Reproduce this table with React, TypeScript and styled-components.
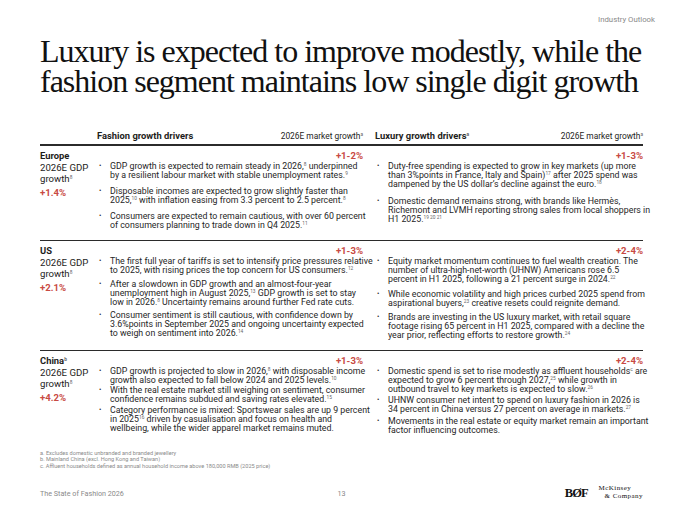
import React from "react";
import styled, { createGlobalStyle } from "styled-components";

const palette = {
  ink: "#1d1d1b",
  red: "#c84a43",
  grey: "#8a8a8a",
  rule: "#2b2b2b",
};

const GlobalStyle = createGlobalStyle`
  html, body {
    margin: 0;
    padding: 0;
    background: #ffffff;
  }
  body {
    font-family: Roboto, "Liberation Sans", Arial, sans-serif;
    color: ${palette.ink};
  }
  * {
    box-sizing: border-box;
  }
`;

const Slide = styled.div`
  width: 681px;
  height: 511px;
  display: flex;
  flex-direction: column;
  padding: 16px 38px 0 40px;
  overflow: hidden;
  background: #fff;
`;

const SectionTag = styled.div`
  align-self: flex-end;
  margin-right: -12px;
  font-size: 7.8px;
  line-height: 8px;
  color: ${palette.grey};
`;

const Title = styled.h1`
  margin: 12px 0 0;
  font-family: "Liberation Serif", "Times New Roman", serif;
  font-weight: 400;
  font-size: 32px;
  line-height: 30px;
  letter-spacing: -1px;
  white-space: nowrap;
  color: #111;
`;

const Table = styled.div`
  margin-top: 35px;
  display: flex;
  flex-direction: column;
`;

const Row = styled.div<{ $head?: boolean; $last?: boolean }>`
  display: grid;
  grid-template-columns: 57px 266px 280px;
  padding: ${(p) => (p.$head ? "0 0 3px" : "4px 0 10px")};
  border-bottom: ${(p) =>
    p.$last ? "none" : p.$head ? `2px solid ${palette.rule}` : `1px solid ${palette.rule}`};
`;

const HeadCell = styled.div<{ $inset?: boolean }>`
  display: flex;
  justify-content: space-between;
  align-items: baseline;
  padding-left: ${(p) => (p.$inset ? "12px" : "0")};
  font-size: 8.4px;
  line-height: 10px;
`;

const HeadTitle = styled.span`
  font-weight: 700;
  font-size: 9.4px;
`;

const Label = styled.div`
  display: flex;
  flex-direction: column;
`;

const RegionName = styled.div`
  font-weight: 700;
  font-size: 9.4px;
  line-height: 12px;
`;

const GdpText = styled.div`
  font-size: 9.6px;
  line-height: 11px;
`;

const RedValue = styled.div<{ $align?: "left" | "right" }>`
  color: ${palette.red};
  font-weight: 700;
  font-size: 9.6px;
  line-height: 12px;
  text-align: ${(p) => p.$align ?? "left"};
`;

const GdpValue = styled(RedValue)`
  margin-top: 3px;
`;

const Drivers = styled.div<{ $inset?: boolean }>`
  display: flex;
  flex-direction: column;
  padding-left: ${(p) => (p.$inset ? "12px" : "0")};
`;

const Bullets = styled.ul`
  list-style: none;
  margin: 0;
  padding: 0;
  display: flex;
  flex-direction: column;
`;

const Bullet = styled.li<{ $space: number }>`
  display: grid;
  grid-template-columns: 13px 1fr;
  margin-top: ${(p) => p.$space}px;
  font-size: 8.8px;
  line-height: 9px;
  color: #262626;
  white-space: nowrap;

  &::before {
    content: "•";
    padding-left: 2px;
    font-size: 7px;
  }
`;

const Sup = styled.sup`
  font-size: 4.8px;
  line-height: 0;
  vertical-align: 3px;
  color: #666;
`;

const Footnotes = styled.div`
  margin-top: auto;
  font-size: 5.6px;
  line-height: 6.5px;
  color: ${palette.grey};
`;

const Footer = styled.div`
  margin-top: 18px;
  height: 24px;
  display: grid;
  grid-template-columns: 1fr auto 1fr;
  align-items: start;
`;

const FooterText = styled.span`
  font-size: 7.2px;
  line-height: 9px;
  color: ${palette.grey};
  padding-top: 2px;
`;

const Logos = styled.div`
  justify-self: end;
  display: flex;
  align-items: flex-start;
  gap: 11px;
  margin-top: -3px;
`;

const BofMark = styled.span`
  font-family: "Liberation Serif", "Times New Roman", serif;
  font-weight: 700;
  font-size: 12.5px;
  line-height: 14px;
  letter-spacing: -1px;
  color: #111;
  padding-top: 2px;
`;

const McKMark = styled.span`
  font-family: "Liberation Serif", "Times New Roman", serif;
  font-size: 7px;
  line-height: 8px;
  letter-spacing: 0.45px;
  color: #111;
  display: flex;
  flex-direction: column;

  > span:last-child {
    padding-left: 6px;
  }
`;

type Line = React.ReactNode;

interface IDrivers {
  value: string;
  gaps: [number, number];
  bullets: Line[][];
}

interface IRegion {
  name: React.ReactNode;
  gdp: string;
  fashion: IDrivers;
  luxury: IDrivers;
}

const regions: IRegion[] = [
  {
    name: "Europe",
    gdp: "+1.4%",
    fashion: {
      value: "+1-2%",
      gaps: [7, 7],
      bullets: [
        [
          <>GDP growth is expected to remain steady in 2026,<Sup>8</Sup> underpinned</>,
          <>by a resilient labour market with stable unemployment rates.<Sup>9</Sup></>,
        ],
        [
          <>Disposable incomes are expected to grow slightly faster than</>,
          <>2025,<Sup>10</Sup> with inflation easing from 3.3 percent to 2.5 percent.<Sup>8</Sup></>,
        ],
        [
          <>Consumers are expected to remain cautious, with over 60 percent</>,
          <>of consumers planning to trade down in Q4 2025.<Sup>11</Sup></>,
        ],
      ],
    },
    luxury: {
      value: "+1-3%",
      gaps: [8, 8],
      bullets: [
        [
          <>Duty-free spending is expected to grow in key markets (up more</>,
          <>than 3%points in France, Italy and Spain)<Sup>17</Sup> after 2025 spend was</>,
          <>dampened by the US dollar’s decline against the euro.<Sup>18</Sup></>,
        ],
        [
          <>Domestic demand remains strong, with brands like Hermès,</>,
          <>Richemont and LVMH reporting strong sales from local shoppers in</>,
          <>H1 2025.<Sup>19 20 21</Sup></>,
        ],
      ],
    },
  },
  {
    name: "US",
    gdp: "+2.1%",
    fashion: {
      value: "+1-3%",
      gaps: [4.5, 4],
      bullets: [
        [
          <>The first full year of tariffs is set to intensify price pressures relative</>,
          <>to 2025, with rising prices the top concern for US consumers.<Sup>12</Sup></>,
        ],
        [
          <>After a slowdown in GDP growth and an almost-four-year</>,
          <>unemployment high in August 2025,<Sup>13</Sup> GDP growth is set to stay</>,
          <>low in 2026.<Sup>8</Sup> Uncertainty remains around further Fed rate cuts.</>,
        ],
        [
          <>Consumer sentiment is still cautious, with confidence down by</>,
          <>3.6%points in September 2025 and ongoing uncertainty expected</>,
          <>to weigh on sentiment into 2026.<Sup>14</Sup></>,
        ],
      ],
    },
    luxury: {
      value: "+2-4%",
      gaps: [6, 5],
      bullets: [
        [
          <>Equity market momentum continues to fuel wealth creation. The</>,
          <>number of ultra-high-net-worth (UHNW) Americans rose 6.5</>,
          <>percent in H1 2025, following a 21 percent surge in 2024.<Sup>22</Sup></>,
        ],
        [
          <>While economic volatility and high prices curbed 2025 spend from</>,
          <>aspirational buyers,<Sup>23</Sup> creative resets could reignite demand.</>,
        ],
        [
          <>Brands are investing in the US luxury market, with retail square</>,
          <>footage rising 65 percent in H1 2025, compared with a decline the</>,
          <>year prior, reflecting efforts to restore growth.<Sup>24</Sup></>,
        ],
      ],
    },
  },
  {
    name: (
      <>
        China<Sup>b</Sup>
      </>
    ),
    gdp: "+4.2%",
    fashion: {
      value: "+1-3%",
      gaps: [1, 2],
      bullets: [
        [
          <>GDP growth is projected to slow in 2026,<Sup>8</Sup> with disposable income</>,
          <>growth also expected to fall below 2024 and 2025 levels.<Sup>10</Sup></>,
        ],
        [
          <>With the real estate market still weighing on sentiment, consumer</>,
          <>confidence remains subdued and saving rates elevated.<Sup>15</Sup></>,
        ],
        [
          <>Category performance is mixed: Sportswear sales are up 9 percent</>,
          <>in 2025<Sup>16</Sup> driven by casualisation and focus on health and</>,
          <>wellbeing, while the wider apparel market remains muted.</>,
        ],
      ],
    },
    luxury: {
      value: "+2-4%",
      gaps: [1.5, 3.5],
      bullets: [
        [
          <>Domestic spend is set to rise modestly as affluent households<Sup>c</Sup> are</>,
          <>expected to grow 6 percent through 2027,<Sup>25</Sup> while growth in</>,
          <>outbound travel to key markets is expected to slow.<Sup>26</Sup></>,
        ],
        [
          <>UHNW consumer net intent to spend on luxury fashion in 2026 is</>,
          <>34 percent in China versus 27 percent on average in markets.<Sup>27</Sup></>,
        ],
        [
          <>Movements in the real estate or equity market remain an important</>,
          <>factor influencing outcomes.</>,
        ],
      ],
    },
  },
];

// One column of drivers: the red growth range on top, then the bullet list
const DriverList: React.FC<IDrivers & { inset?: boolean }> = ({ value, gaps, bullets, inset }) => (
  <Drivers $inset={inset}>
    <RedValue $align="right">{value}</RedValue>
    <Bullets>
      {bullets.map((lines, i) => (
        <Bullet key={i} $space={i > 0 ? gaps[i - 1] : 0}>
          <span>
            {lines.map((line, j) => (
              <React.Fragment key={j}>
                {line}
                {j < lines.length - 1 ? <br /> : null}
              </React.Fragment>
            ))}
          </span>
        </Bullet>
      ))}
    </Bullets>
  </Drivers>
);

const App: React.FC = () => {
  return (
    <>
      <GlobalStyle />
      <Slide>
        <SectionTag>Industry Outlook</SectionTag>
        <Title>
          Luxury is expected to improve modestly, while the
          <br />
          fashion segment maintains low single digit growth
        </Title>

        <Table>
          <Row $head>
            <div />
            <HeadCell>
              <HeadTitle>Fashion growth drivers</HeadTitle>
              <span>
                2026E market growth<Sup>a</Sup>
              </span>
            </HeadCell>
            <HeadCell $inset>
              <HeadTitle>
                Luxury growth drivers<Sup>a</Sup>
              </HeadTitle>
              <span>
                2026E market growth<Sup>a</Sup>
              </span>
            </HeadCell>
          </Row>

          {regions.map((r, i) => (
            <Row key={i} $last={i === regions.length - 1}>
              <Label>
                <RegionName>{r.name}</RegionName>
                <GdpText>
                  2026E GDP
                  <br />
                  growth<Sup>8</Sup>
                </GdpText>
                <GdpValue>{r.gdp}</GdpValue>
              </Label>
              <DriverList {...r.fashion} />
              <DriverList {...r.luxury} inset />
            </Row>
          ))}
        </Table>

        <Footnotes>
          <div>a. Excludes domestic unbranded and branded jewellery</div>
          <div>b. Mainland China (excl. Hong Kong and Taiwan)</div>
          <div>c. Affluent households defined as annual household income above 180,000 RMB (2025 price)</div>
        </Footnotes>

        <Footer>
          <FooterText>The State of Fashion 2026</FooterText>
          <FooterText>13</FooterText>
          <Logos>
            <BofMark>BØF</BofMark>
            <McKMark>
              <span>McKinsey</span>
              <span>&amp; Company</span>
            </McKMark>
          </Logos>
        </Footer>
      </Slide>
    </>
  );
};

export default App;
